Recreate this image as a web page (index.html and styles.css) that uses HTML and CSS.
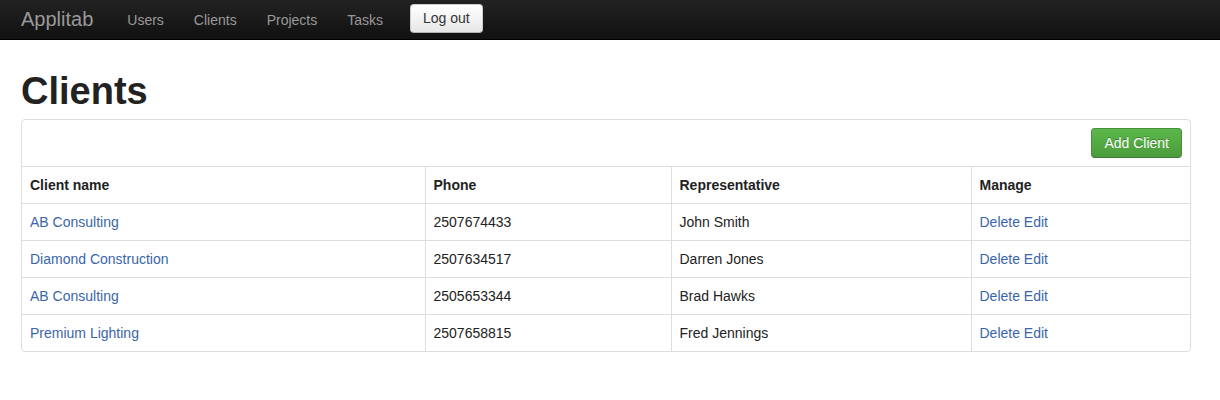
FILE: index.html
```html
<!DOCTYPE html>
<html>
<head>
<meta charset="utf-8">
<title>Applitab - Clients</title>
<link rel="stylesheet" href="styles.css">
</head>
<body>
<div class="navbar">
  <div class="nav-inner">
    <a class="brand" href="#">Applitab</a>
    <nav class="nav">
      <a href="#">Users</a>
      <a href="#">Clients</a>
      <a href="#">Projects</a>
      <a href="#">Tasks</a>
    </nav>
    <button class="btn btn-default">Log out</button>
  </div>
</div>
<main class="container">
  <h1 class="title">Clients</h1>
  <div class="panel">
    <div class="toolbar">
      <button class="btn btn-success">Add Client</button>
    </div>
    <table class="table">
      <colgroup>
        <col class="c1"><col class="c2"><col class="c3"><col class="c4">
      </colgroup>
      <thead>
        <tr><th>Client name</th><th>Phone</th><th>Representative</th><th>Manage</th></tr>
      </thead>
      <tbody>
        <tr><td><a href="#">AB Consulting</a></td><td>2507674433</td><td>John Smith</td><td><a href="#">Delete</a> <a href="#">Edit</a></td></tr>
        <tr><td><a href="#">Diamond Construction</a></td><td>2507634517</td><td>Darren Jones</td><td><a href="#">Delete</a> <a href="#">Edit</a></td></tr>
        <tr><td><a href="#">AB Consulting</a></td><td>2505653344</td><td>Brad Hawks</td><td><a href="#">Delete</a> <a href="#">Edit</a></td></tr>
        <tr><td><a href="#">Premium Lighting</a></td><td>2507658815</td><td>Fred Jennings</td><td><a href="#">Delete</a> <a href="#">Edit</a></td></tr>
      </tbody>
    </table>
  </div>
</main>
</body>
</html>
```
FILE: styles.css
```css
* { box-sizing: border-box; }
html, body { margin: 0; padding: 0; }
body {
  font-family: "Liberation Sans", Arial, Helvetica, sans-serif;
  font-size: 14px;
  line-height: 20px;
  color: #333;
  background: #fff;
}
a { color: #3a66a8; text-decoration: none; }

.navbar {
  height: 40px;
  background: linear-gradient(to bottom, #222 0%, #111 100%);
  border-bottom: 1px solid #000;
}
.nav-inner {
  display: flex;
  align-items: flex-start;
  padding-left: 21px;
}
.brand {
  font-size: 20px;
  font-weight: 200;
  color: #999;
  padding: 9px 19px 11px 0;
  line-height: 20px;
}
.nav { display: flex; }
.nav a {
  color: #999;
  padding: 10px 15px;
  line-height: 20px;
}
.btn {
  font-family: inherit;
  font-size: 14px;
  line-height: 20px;
  padding: 4px 12px;
  border-radius: 4px;
  cursor: pointer;
}
.btn-default {
  margin: 4px 0 0 12px;
  height: 29px;
  padding: 3px 12px 4px;
  color: #333;
  background: linear-gradient(to bottom, #ffffff 0%, #e6e6e6 100%);
  border: 1px solid #ccc;
  border-bottom-color: #b3b3b3;
}
.btn-success {
  color: #fff;
  text-shadow: 0 -1px 0 rgba(0,0,0,0.3);
  background: linear-gradient(to bottom, #5cb84a 0%, #4a9c3c 100%);
  border: 1px solid #44903a;
  border-bottom-color: #3a7a32;
  height: 30px;
}

.container {
  width: 1170px;
  margin-left: 21px;
  padding-top: 21px;
}
.title {
  font-size: 38px;
  line-height: 40px;
  font-weight: bold;
  color: #222;
  margin: 10px 0 8px 0;
}
.panel {
  border: 1px solid #ddd;
  border-radius: 4px;
  overflow: hidden;
}
.toolbar {
  padding: 8px;
  display: flex;
  justify-content: flex-end;
  border-bottom: 1px solid #ddd;
}
.table {
  width: 100%;
  border-collapse: collapse;
  table-layout: fixed;
}
.c1 { width: 403px; }
.c2 { width: 246px; }
.c3 { width: 300px; }
.c4 { width: 219px; }
.table th, .table td {
  padding: 8px;
  line-height: 20px;
  text-align: left;
  vertical-align: top;
  border-top: 1px solid #ddd;
  border-left: 1px solid #ddd;
  color: #222;
}
.table th { font-weight: bold; }
.table thead tr:first-child th { border-top: 0; }
.table th:first-child, .table td:first-child { border-left: 0; }
```
